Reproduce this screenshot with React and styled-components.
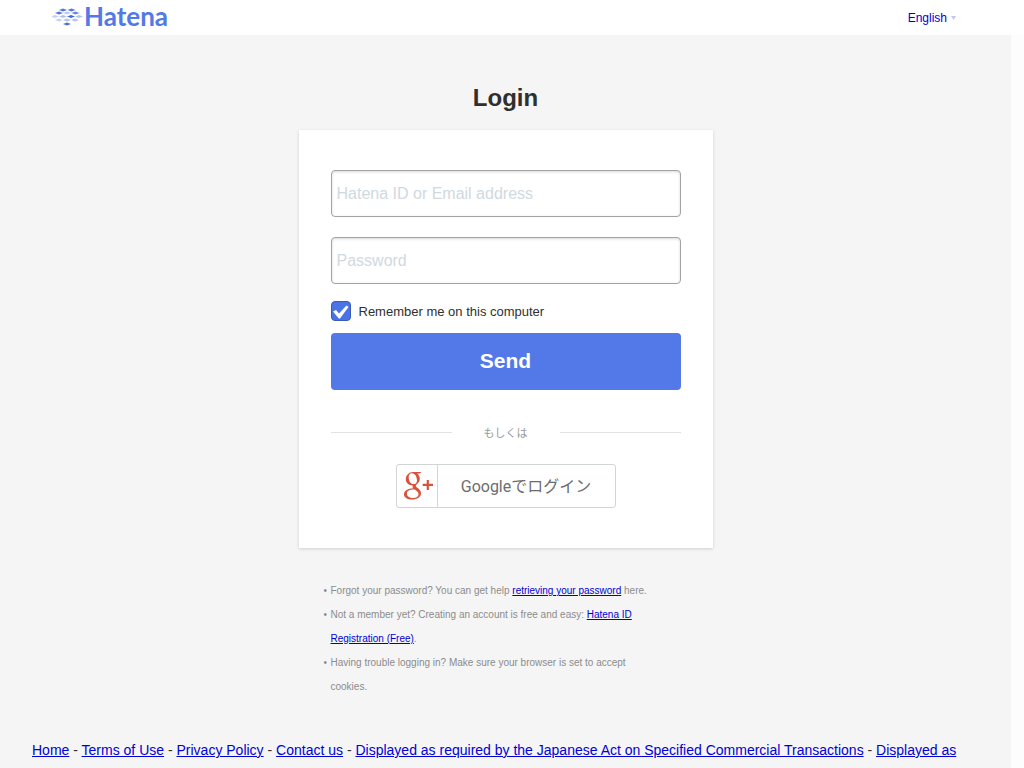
import React from "react";
import styled, { createGlobalStyle } from "styled-components";

const Global = createGlobalStyle`
  *, *::before, *::after { box-sizing: border-box; }
  html { background: #fdfdfd; }
  body {
    margin: 0;
    font-family: "Liberation Sans", "Noto Sans CJK JP", sans-serif;
    color: #2f2f2f;
  }
  a { color: #0000d4; }
`;

const Page = styled.div`
  margin-right: 13px;
  min-height: 100vh;
  background: #f5f5f5;
`;

const Header = styled.header`
  display: flex;
  align-items: center;
  justify-content: space-between;
  height: 35px;
  margin-right: -13px;
  padding: 0 68px 0 52px;
  background: #fff;
`;

const LogoLink = styled.a`
  display: flex;
  align-items: center;
  gap: 1px;
  color: #5279e7;
  text-decoration: none;
`;

const LogoText = styled.span`
  padding-bottom: 4px;
  font: 700 26px/30px Lato, sans-serif;
`;

const Language = styled.a`
  display: flex;
  align-items: center;
  gap: 4px;
  font-size: 12px;
  line-height: 20px;
  text-decoration: none;
`;

const Main = styled.main`
  display: flex;
  flex-direction: column;
  align-items: center;
  padding-top: 48px;
`;

const Title = styled.h1`
  margin: 0 0 17px;
  font-size: 24px;
  line-height: 30px;
`;

const Card = styled.form`
  width: 100%;
  max-width: 414px;
  padding: 40px 32px;
  background: #fff;
  box-shadow: 0 1px 3px rgba(0, 0, 0, 0.16);
`;

const Field = styled.input`
  display: block;
  width: 100%;
  height: 47px;
  margin-bottom: 20px;
  padding: 0 5px;
  border: 1px solid #a3a3a3;
  border-radius: 4px;
  background: #fff;
  box-shadow: inset 0 1px 3px rgba(0, 0, 0, 0.15);
  font: 16px "Liberation Sans", sans-serif;
  &::placeholder { color: #cfd9e1; opacity: 1; }
`;

const Remember = styled.label`
  display: flex;
  align-items: center;
  gap: 8px;
  margin: -4px 0 11px;
  font-size: 13px;
  line-height: 22px;
`;

const RememberText = styled.span`
  padding-top: 2px;
  line-height: 20px;
`;

const Tick = styled.span`
  display: grid;
  width: 20px;
  height: 20px;
  & > * { grid-area: 1 / 1; }
  svg { pointer-events: none; visibility: hidden; }
  input:checked + svg { visibility: visible; }
`;

const TickBox = styled.input`
  appearance: none;
  width: 20px;
  height: 20px;
  margin: 0;
  border: 1px solid #3a5cb8;
  border-radius: 4px;
  background: #fff;
  &:checked { background: #4a74e6; }
`;

const Send = styled.button`
  display: block;
  width: 100%;
  height: 57px;
  padding: 0 0 2px;
  border: 0;
  border-radius: 4px;
  background: #5279e7;
  color: #fff;
  font: bold 21px "Liberation Sans", sans-serif;
`;

const Divider = styled.div`
  display: flex;
  align-items: center;
  gap: 32px;
  margin: 32px 0 22px;
  color: #999;
  font: 11px/20px "Noto Sans CJK JP", sans-serif;
  &::before, &::after {
    content: "";
    flex: 1;
    height: 1px;
    background: #e3e3e3;
  }
`;

const GoogleButton = styled.button`
  display: flex;
  align-items: stretch;
  width: 220px;
  height: 44px;
  margin: 0 auto;
  padding: 0;
  border: 1px solid #d2d5d5;
  border-radius: 3px;
  background: #fff;
  color: #6d6d6d;
  font: 16px/44px Roboto, "Noto Sans CJK JP", sans-serif;
`;

const GoogleIcon = styled.span`
  display: flex;
  align-items: center;
  justify-content: center;
  width: 41px;
  border-right: 1px solid #d2d5d5;
`;

const GoogleLabel = styled.span`
  flex: 1;
`;

const Help = styled.ul`
  width: 100%;
  max-width: 350px;
  margin: 31px 0 0;
  padding: 0 20px 0 0;
  list-style: none;
  color: #8c8c8c;
  font-size: 10px;
  line-height: 24px;
`;

const HelpItem = styled.li`
  text-indent: -7px;
  &::before { content: "•"; display: inline-block; width: 7px; text-indent: 0; }
`;

const Footer = styled.footer`
  padding: 38px 30px 24px 32px;
  font-size: 14px;
  line-height: 26px;
`;

const footerLinks = [
  "Home",
  "Terms of Use",
  "Privacy Policy",
  "Contact us",
  "Displayed as required by the Japanese Act on Specified Commercial Transactions",
  "Displayed as required by the Telecommunications Business Act",
];

const tiles = [
  [11, 2, 0.9], [19.500, 2, 0.9],
  [7, 5, 0.9], [15, 5, 0.35], [23.500, 5, 0.8],
  [3, 8.500, 0.3], [11, 8.500, 0.4], [19, 8.500, 1], [27, 8.500, 0.4],
  [7, 12, 0.3], [15, 12, 0.4], [23, 12, 0.4],
  [15, 16, 0.95],
];

function HatenaMark() {
  return (
    <svg width="31" height="20" viewBox="0 0 31 20" aria-hidden="true">
      {tiles.map(([x, y, o]) => (
        <path key={`${x}-${y}`} d={`M${x - 4} ${y}L${x} ${y - 1.5}L${x + 4} ${y}L${x} ${y + 1.5}Z`} fill="#4168dc" opacity={o} />
      ))}
    </svg>
  );
}

function GooglePlus() {
  return (
    <svg width="32" height="30" viewBox="0 0 32 30" aria-hidden="true">
      <g fill="#d9513d" fillRule="evenodd">
        <path d="M12 1H20.500L18.500 2.600H16C18 4 18.800 5.800 18.800 7.800C18.800 10.500 17.300 12 15.800 13.200C14.300 14.400 14.500 15.400 16 16.500C18.500 18.300 20 19.800 20 22.300C20 26 16.500 28.600 11 28.600C6 28.600 3 26.500 3 23.300C3 19.500 7 17.500 12.300 17.200C11.500 16.300 11.300 15.400 11.700 14.300C7.500 14.600 4.800 11.800 4.800 8.300C4.800 4.300 8 1 12 1ZM11 2.200C8.900 2.200 7.700 3.800 7.700 6.200C7.700 9.500 9.400 13.100 12.500 13.100C14.800 13.100 16 11.600 16 9.400C16 6 14.200 2.200 11 2.200ZM12.800 18.400C8.800 18.400 5.900 19.700 5.900 22.500C5.900 25.300 8.500 27 12 27C15.600 27 17.500 25.500 17.500 23.200C17.500 21.200 16 20.200 13.800 18.500Z" />
        <path d="M25.700 9H27.900V12.800H32V15H27.900V19H25.700V15H21.700V12.800H25.700Z" />
      </g>
    </svg>
  );
}

export default function App() {
  return (
    <Page>
      <Global />
      <Header>
        <LogoLink href="#">
          <HatenaMark />
          <LogoText>Hatena</LogoText>
        </LogoLink>
        <Language href="#">
          English
          <svg width="5" height="4" viewBox="0 0 5 4" aria-hidden="true">
            <path d="M0 0H5L2.500 4Z" fill="#c9c6ea" />
          </svg>
        </Language>
      </Header>
      <Main>
        <Title>Login</Title>
        <Card onSubmit={(e) => e.preventDefault()}>
          <Field type="text" aria-label="Hatena ID or Email address" placeholder="Hatena ID or Email address" />
          <Field type="password" aria-label="Password" placeholder="Password" />
          <Remember>
            <Tick>
              <TickBox type="checkbox" defaultChecked />
              <svg width="20" height="20" viewBox="0 0 20 20" aria-hidden="true">
                <path d="M2 10.500L5 9L8 12.500L15.500 4.500L17.500 6L9 17.500H7.800Z" fill="#fff" />
              </svg>
            </Tick>
            <RememberText>Remember me on this computer</RememberText>
          </Remember>
          <Send type="submit">Send</Send>
          <Divider>もしくは</Divider>
          <GoogleButton type="button">
            <GoogleIcon><GooglePlus /></GoogleIcon>
            <GoogleLabel>Googleでログイン</GoogleLabel>
          </GoogleButton>
        </Card>
        <Help>
          <HelpItem>Forgot your password? You can get help <a href="#">retrieving your password</a> here.</HelpItem>
          <HelpItem>Not a member yet? Creating an account is free and easy: <a href="#">Hatena ID Registration (Free)</a>.</HelpItem>
          <HelpItem>Having trouble logging in? Make sure your browser is set to accept cookies.</HelpItem>
        </Help>
      </Main>
      <Footer>
        {footerLinks.map((label, i) => (
          <React.Fragment key={label}>
            {i > 0 && " - "}
            <a href="#">{label}</a>
          </React.Fragment>
        ))}
      </Footer>
    </Page>
  );
}
